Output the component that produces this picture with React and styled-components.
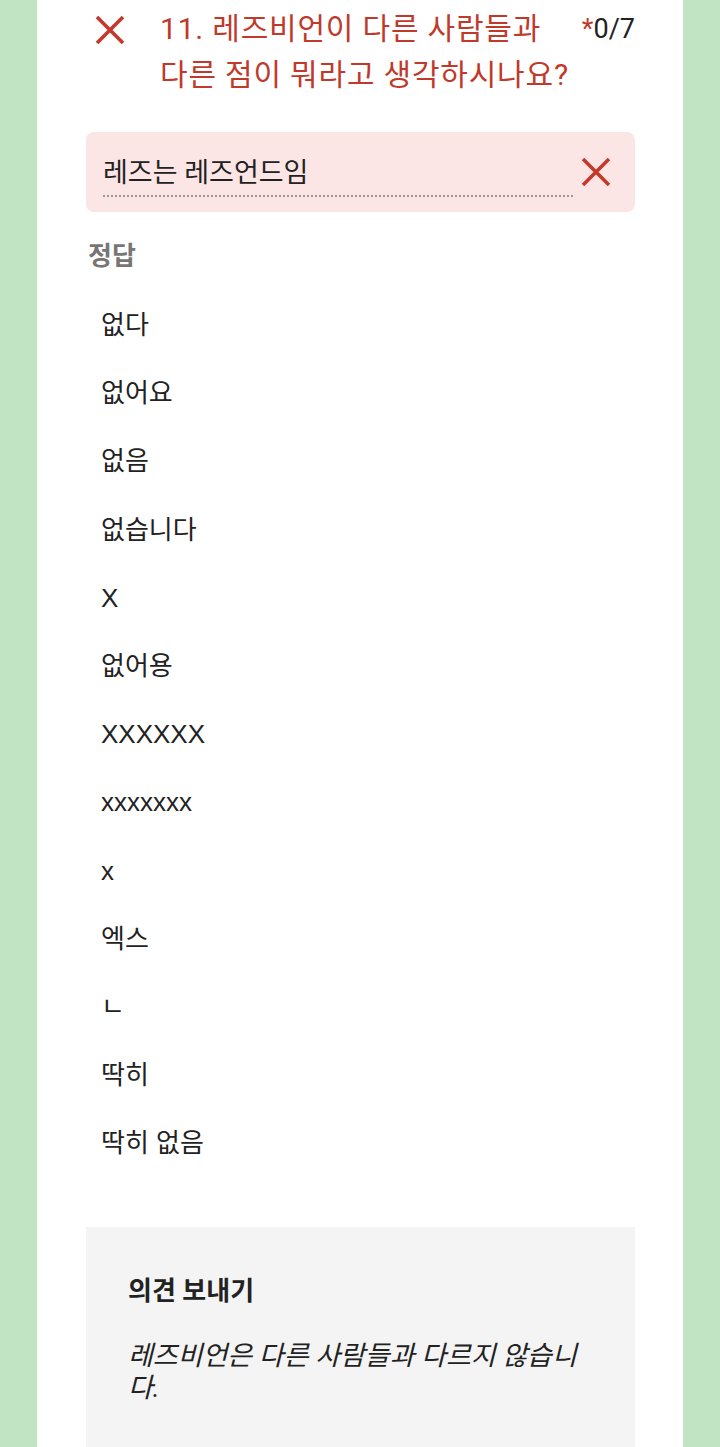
import React from "react";
import styled, { createGlobalStyle } from "styled-components";

const GlobalStyle = createGlobalStyle`
  body {
    margin: 0;
    background: #c1e4c3;
    font-family: Roboto, "Noto Sans CJK KR", sans-serif;
  }
`;

const Page = styled.div`
  width: 646px;
  min-height: 1447px;
  margin: 0 auto 0 37px;
  background: #ffffff;
  padding: 0 48px 0 49px;
  box-sizing: border-box;
  overflow: hidden;
`;

const Header = styled.div`
  display: flex;
  align-items: flex-start;
  padding: 6px 0 0 9px;
`;

const IconBox = styled.div`
  width: 30px;
  flex: none;
  padding-top: 9px;
  margin-right: 35px;
  display: flex;
`;

const Title = styled.h2`
  flex: 1;
  margin: 0;
  font-weight: 400;
  font-size: 30px;
  line-height: 46px;
  letter-spacing: 0.8px;
  word-break: keep-all;
  color: #c0392b;
`;

const Score = styled.div`
  flex: none;
  font-size: 27px;
  line-height: 46px;
  color: #222;
  margin-left: 4px;
  white-space: nowrap;
  span {
    color: #c0392b;
  }
`;

const AnswerBox = styled.div`
  margin-top: 34px;
  height: 80px;
  background: #fce6e5;
  border-radius: 8px;
  display: flex;
  align-items: center;
  padding: 0 24px 0 17px;
  box-sizing: border-box;
`;

const AnswerText = styled.div`
  flex: 1;
  font-size: 27px;
  line-height: 36px;
  color: #222;
  padding-top: 8px;
  padding-bottom: 4px;
  border-bottom: 2px dotted #9a9a9a;
  margin-right: 8px;
`;

const Label = styled.div`
  margin-top: 28px;
  font-size: 26px;
  font-weight: 700;
  color: #767676;
  line-height: 32px;
  padding-left: 2px;
`;

const List = styled.ul`
  list-style: none;
  margin: 35px 0 0;
  padding: 0 0 0 15px;
`;

const Item = styled.li`
  font-family: "Liberation Sans", "Noto Sans CJK KR", sans-serif;
  font-size: 26px;
  line-height: 36px;
  height: 68.2px;
  color: #222;
`;

const Feedback = styled.div`
  margin-top: 34px;
  background: #f4f4f4;
  padding: 48px 48px 60px 42px;
  min-height: 240px;
`;

const FeedbackTitle = styled.div`
  font-size: 26px;
  font-weight: 700;
  color: #222;
  line-height: 32px;
`;

const FeedbackText = styled.p`
  margin: 33px 0 0;
  font-size: 27px;
  font-style: italic;
  line-height: 32px;
  color: #222;
`;

const Cross = ({ size = 30 }) => (
  <svg width={size} height={size} viewBox="0 0 30 30">
    <path d="M2 2 L28 28 M28 2 L2 28" stroke="#c5382b" strokeWidth="3.6" strokeLinecap="butt" />
  </svg>
);

const answers = [
  "없다",
  "없어요",
  "없음",
  "없습니다",
  "X",
  "없어용",
  "XXXXXX",
  "xxxxxxx",
  "x",
  "엑스",
  "ㄴ",
  "딱히",
  "딱히 없음",
];

export default function App() {
  return (
    <>
      <GlobalStyle />
      <Page>
        <Header>
          <IconBox>
            <Cross />
          </IconBox>
          <Title>11. 레즈비언이 다른 사람들과 다른 점이 뭐라고 생각하시나요?</Title>
          <Score>
            <span>*</span>0/7
          </Score>
        </Header>
        <AnswerBox>
          <AnswerText>레즈는 레즈언드임</AnswerText>
          <Cross />
        </AnswerBox>
        <Label>정답</Label>
        <List>
          {answers.map((a, i) => (
            <Item key={i}>{a}</Item>
          ))}
        </List>
        <Feedback>
          <FeedbackTitle>의견 보내기</FeedbackTitle>
          <FeedbackText>레즈비언은 다른 사람들과 다르지 않습니다.</FeedbackText>
        </Feedback>
      </Page>
    </>
  );
}
